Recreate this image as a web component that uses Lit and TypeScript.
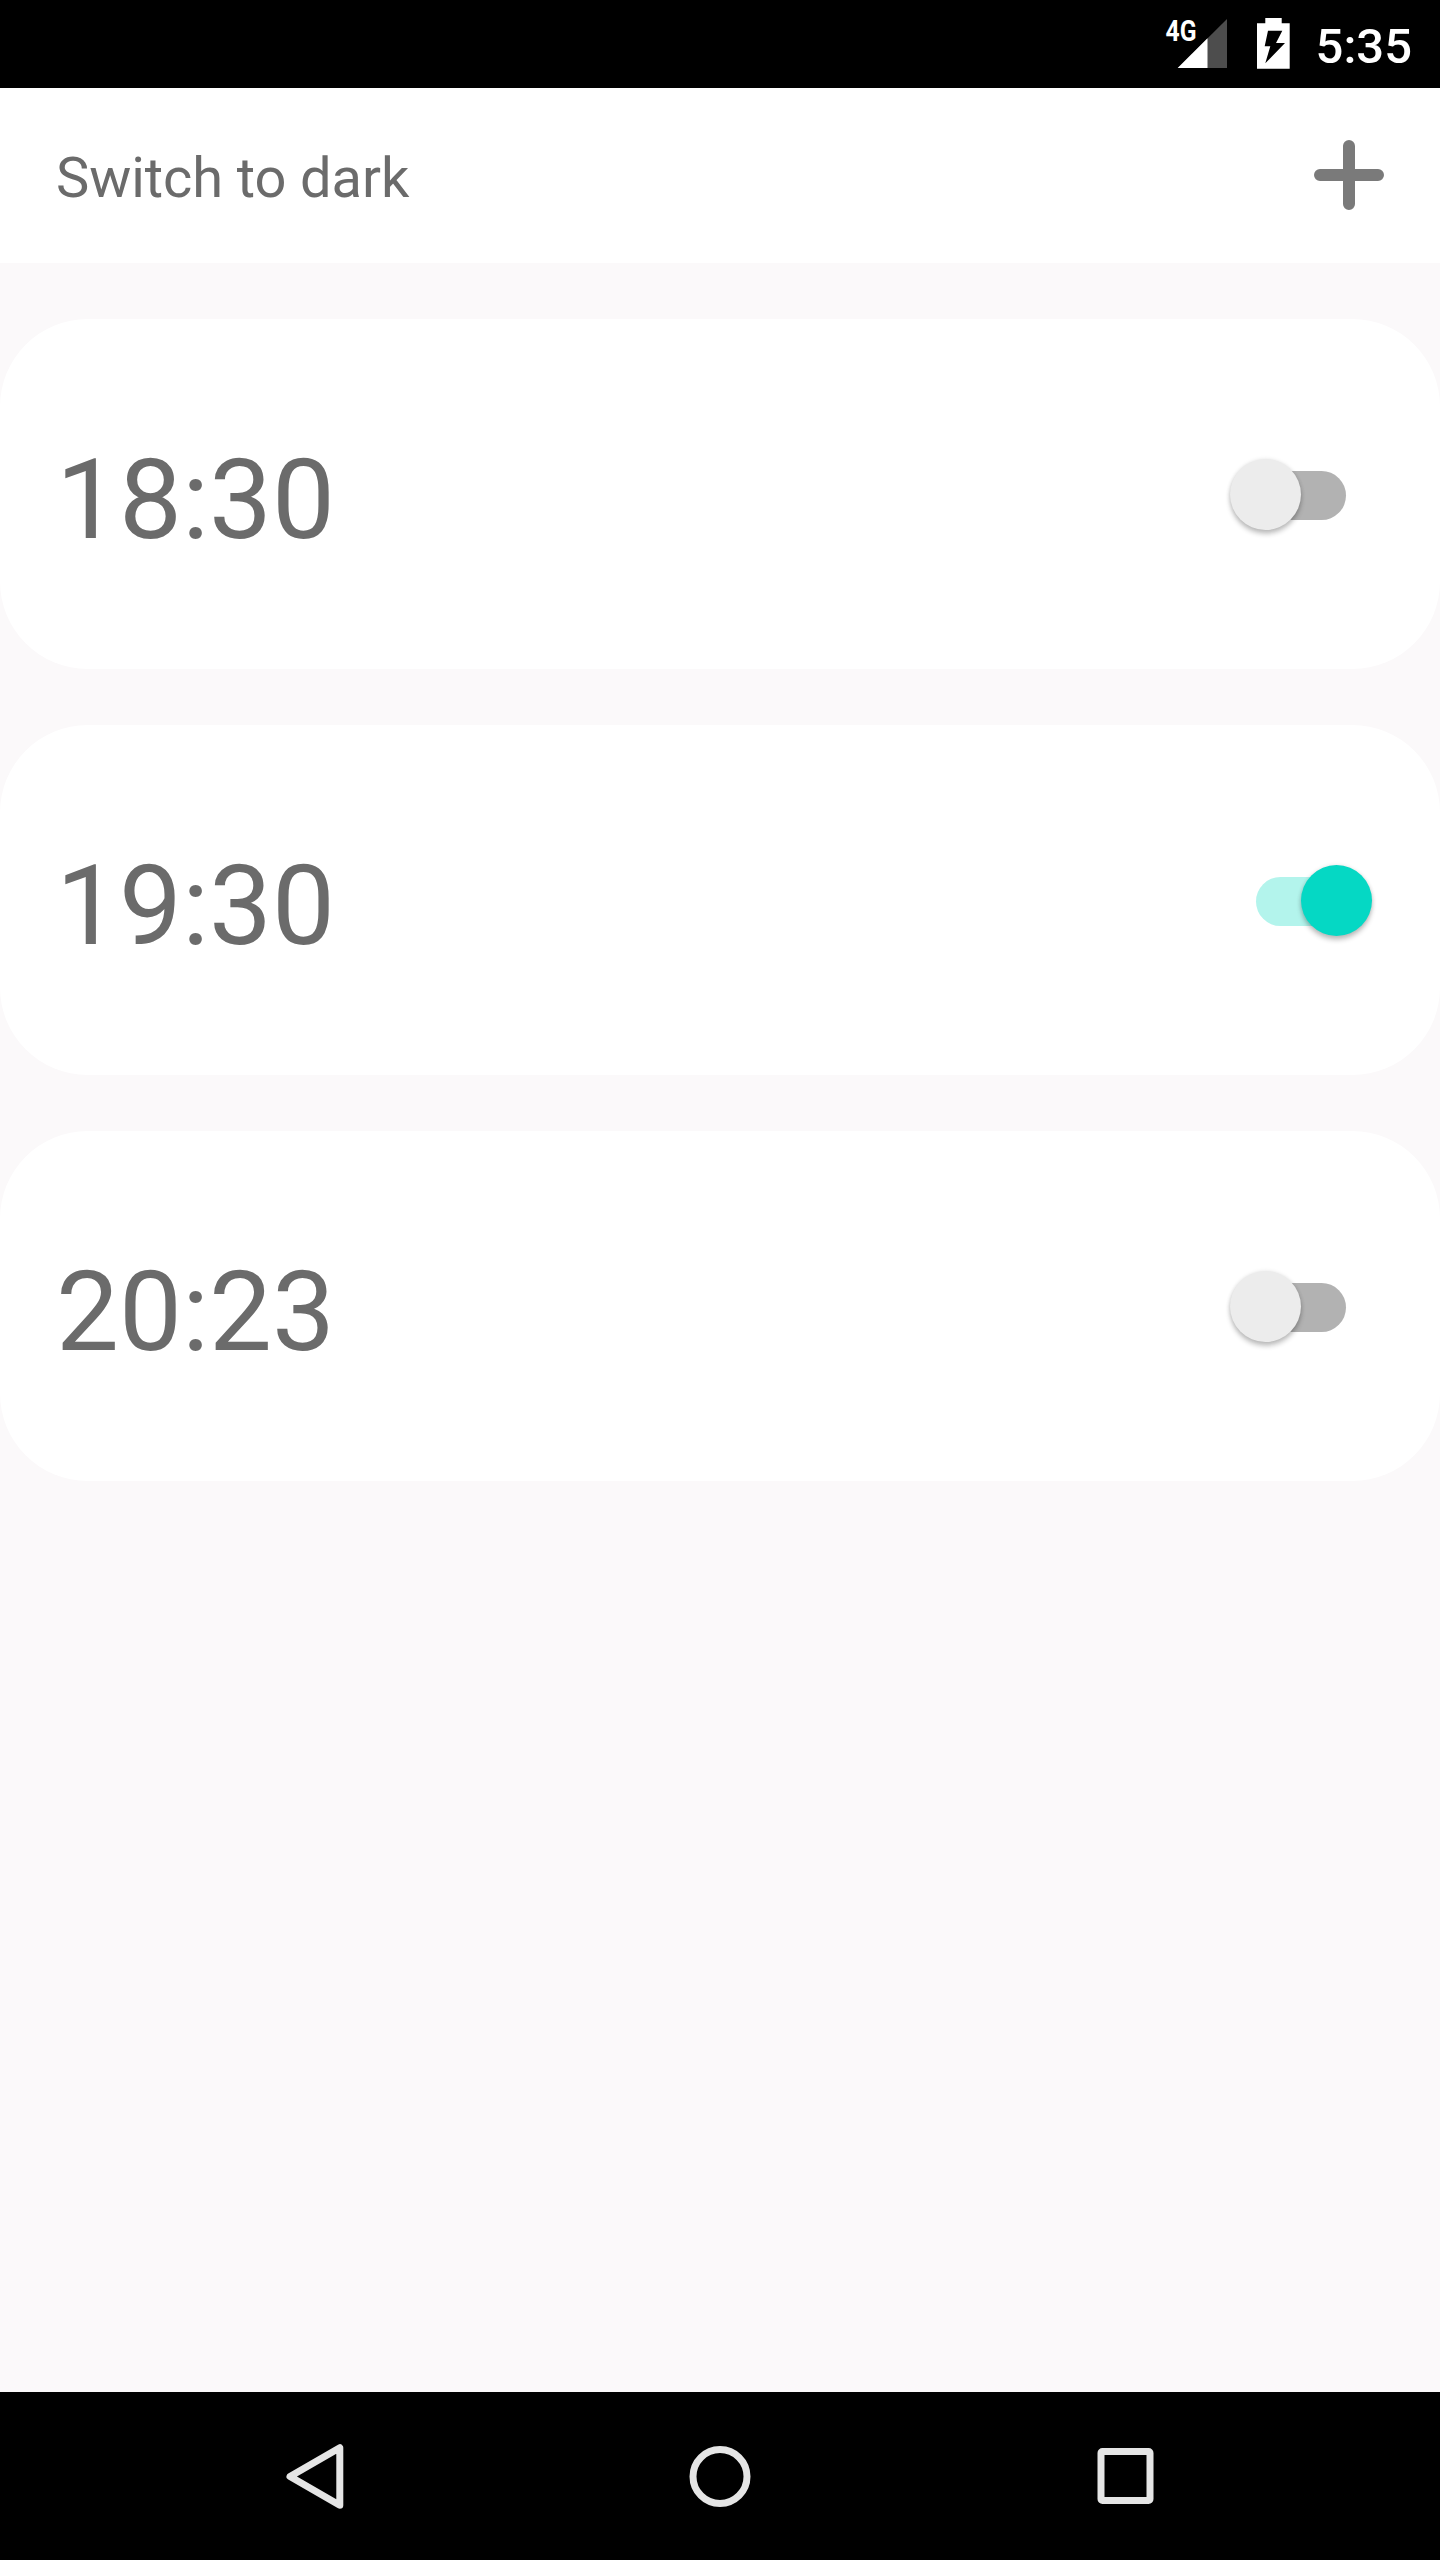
import { LitElement, html, css } from "lit";
import { customElement, property, state } from "lit/decorators.js";
import { classMap } from "lit/directives/class-map.js";

interface Alarm {
  time: string;
  enabled: boolean;
}

@customElement("status-bar")
class StatusBar extends LitElement {
  static styles = css`
    :host {
      display: flex;
      justify-content: flex-end;
      box-sizing: border-box;
      height: 88px;
      padding-right: 28px;
      background: #000;
      color: #fff;
    }
    .icons {
      display: block;
      width: 128px;
      height: 88px;
      margin-right: 24px;
    }
    .network {
      font: 700 29.5px Roboto, sans-serif;
    }
    .clock {
      font: 500 49px/58px Roboto, sans-serif;
      padding-top: 18px;
      white-space: nowrap;
    }
  `;

  render() {
    return html`
      <svg class="icons" viewBox="1164 0 128 88" fill="#fff">
        <path d="M1227 19V68H1177.7Z" fill="#4d4d4d" />
        <path d="M1207.5 38.3V68H1177.7Z" />
        <text class="network" x="1165.5" y="41.3" textLength="31" lengthAdjust="spacingAndGlyphs">4G</text>
        <path d="M1265.3 18H1281.7V23.3H1289.7V68.7H1257V23.3H1265.3Z" />
        <path
          d="M1268 30.7H1282.3L1276 43H1285L1265.3 63.3L1270.3 46.3H1264.7Z"
          fill="#000"
        />
      </svg>
      <span class="clock">5:35</span>
    `;
  }
}

@customElement("toggle-switch")
class ToggleSwitch extends LitElement {
  @property({ type: Boolean }) on = false;

  static styles = css`
    :host {
      display: block;
    }
    .switch {
      display: grid;
      align-items: center;
      width: 142px;
      height: 71px;
    }
    .track,
    .thumb {
      grid-area: 1 / 1;
    }
    .track {
      justify-self: center;
      width: 90px;
      height: 49px;
      margin-top: 3px;
      border-radius: 25px;
      background: #b2b2b2;
    }
    .thumb {
      justify-self: start;
      width: 71px;
      height: 71px;
      border-radius: 50%;
      background: #ececec;
      box-shadow: 0 4px 5px rgba(0, 0, 0, 0.24), 0 0 4px rgba(0, 0, 0, 0.1);
    }
    .on .track {
      background: #b3f4ec;
    }
    .on .thumb {
      justify-self: end;
      background: #05d8c4;
    }
  `;

  render() {
    return html`
      <div class=${classMap({ switch: true, on: this.on })}>
        <div class="track"></div>
        <div class="thumb"></div>
      </div>
    `;
  }
}

@customElement("alarm-card")
class AlarmCard extends LitElement {
  @property() time = "";
  @property({ type: Boolean }) enabled = false;

  static styles = css`
    :host {
      display: flex;
      align-items: center;
      justify-content: space-between;
      box-sizing: border-box;
      height: 350px;
      padding: 0 68px 0 56px;
      border-radius: 87.5px;
      background: #fff;
    }
    .time {
      padding-top: 12px;
      font: 400 112px/132px Roboto, sans-serif;
      color: #6b6b6b;
    }
  `;

  render() {
    return html`
      <span class="time">${this.time}</span>
      <toggle-switch ?on=${this.enabled}></toggle-switch>
    `;
  }
}

@customElement("nav-bar")
class NavBar extends LitElement {
  static styles = css`
    :host {
      display: grid;
      grid-template-columns: repeat(3, 405px);
      justify-content: center;
      justify-items: center;
      align-items: center;
      height: 168px;
      background: #000;
    }
    .icon {
      width: 70px;
      height: 70px;
      fill: none;
      stroke: #e5e5e5;
      stroke-width: 7;
      stroke-linejoin: round;
    }
  `;

  render() {
    return html`
      <svg class="icon" viewBox="0 0 70 70">
        <path d="M10 35.5L59.8 6.7V64.3Z" />
      </svg>
      <svg class="icon" viewBox="0 0 70 70">
        <circle cx="35" cy="35.5" r="27" />
      </svg>
      <svg class="icon" viewBox="0 0 70 70">
        <rect x="11" y="10.5" width="49" height="49" rx="1.5" />
      </svg>
    `;
  }
}

@customElement("app-root")
class AppRoot extends LitElement {
  @state() private alarms: Alarm[] = [
    { time: "18:30", enabled: false },
    { time: "19:30", enabled: true },
    { time: "20:23", enabled: false },
  ];

  static styles = css`
    :host {
      display: flex;
      flex-direction: column;
      width: 1440px;
      height: 2560px;
      background: #fbf9fa;
    }
    .toolbar {
      display: flex;
      align-items: center;
      justify-content: space-between;
      box-sizing: border-box;
      height: 175px;
      padding: 0 56px;
      background: #fff;
    }
    .theme {
      padding-top: 4px;
      font: 400 56px/66px Roboto, sans-serif;
      letter-spacing: -0.08px;
      color: #6b6b6b;
    }
    .add {
      width: 70px;
      height: 70px;
      margin-bottom: 1px;
      fill: none;
      stroke: #7a7a7a;
      stroke-width: 12;
      stroke-linecap: round;
    }
    .alarms {
      display: flex;
      flex: 1;
      flex-direction: column;
      gap: 56px;
      padding-top: 56px;
    }
  `;

  render() {
    return html`
      <status-bar></status-bar>
      <header class="toolbar">
        <span class="theme">Switch to dark</span>
        <svg class="add" viewBox="0 0 70 70">
          <path d="M35 6V64M6 35H64" />
        </svg>
      </header>
      <main class="alarms">
        ${this.alarms.map(
          (a) => html`<alarm-card .time=${a.time} ?enabled=${a.enabled}></alarm-card>`
        )}
      </main>
      <nav-bar></nav-bar>
    `;
  }
}
